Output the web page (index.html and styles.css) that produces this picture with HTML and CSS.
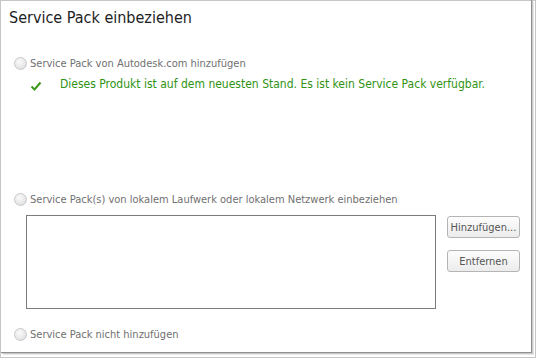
FILE: index.html
```html
<!DOCTYPE html>
<html>
<head>
<meta charset="utf-8">
<link rel="stylesheet" href="styles.css">
</head>
<body>
<div class="frame">
  <div class="panel">
    <h1 class="title">Service Pack einbeziehen</h1>
    <div class="option opt-first">
      <span class="radio"></span>
      <span class="label">Service Pack von Autodesk.com hinzufügen</span>
    </div>
    <div class="status">
      <svg class="check" width="12" height="10" viewBox="0 0 12 10"><path d="M1.5 5.5 L4.5 8.5 L10.5 1.5" fill="none" stroke="#3a9a1a" stroke-width="2"/></svg>
      <span class="status-text">Dieses Produkt ist auf dem neuesten Stand. Es ist kein Service Pack verfügbar.</span>
    </div>
    <div class="option opt-second">
      <span class="radio"></span>
      <span class="label">Service Pack(s) von lokalem Laufwerk oder lokalem Netzwerk einbeziehen</span>
    </div>
    <div class="local">
      <div class="listbox"></div>
      <div class="buttons">
        <button class="btn">Hinzufügen...</button>
        <button class="btn">Entfernen</button>
      </div>
    </div>
    <div class="option opt-third">
      <span class="radio"></span>
      <span class="label">Service Pack nicht hinzufügen</span>
    </div>
  </div>
</div>
</body>
</html>
```
FILE: styles.css
```css
html, body { margin: 0; padding: 0; background: #fff; }
body { width: 536px; height: 358px; overflow: hidden; font-family: "DejaVu Sans Condensed", "DejaVu Sans", sans-serif; }
.frame {
  box-sizing: border-box;
  width: 536px; height: 358px;
  border: 1px solid #c6c6c6;
  background: #fff;
}
.panel {
  box-sizing: border-box;
  width: 531px; height: 353px;
  margin-top: -1px;
  border-right: 1px solid #8f8f8f;
  border-bottom: 1px solid #8f8f8f;
  box-shadow: 1px 1px 0 #c8c8c8, 2px 2px 0 #e6e6e6;
  padding: 0 0 0 8px;
}
.title {
  margin: 0; padding: 7px 0 0 0;
  font-weight: normal; font-size: 16px; line-height: 22px; color: #1e1e1e;
  font-family: "DejaVu Sans Condensed", "DejaVu Sans", sans-serif;
}
.option { display: flex; align-items: center; height: 14px; }
.opt-first { margin-top: 27px; }
.opt-second { margin-top: 101px; }
.opt-third { margin-top: 18px; }
.radio {
  box-sizing: border-box;
  width: 13px; height: 13px; border-radius: 50%;
  border: 1px solid #c9c9c9;
  background: radial-gradient(circle at 40% 35%, #fafafa 0%, #e9e9e9 55%, #d6d6d6 100%);
  margin-left: 5px; margin-right: 3px;
}
.label { font-size: 11px; color: #707070; }
.status { display: flex; align-items: center; margin-top: 7px; height: 14px; }
.check { margin-left: 21px; margin-top: 4px; }
.status-text { margin-left: 18px; font-size: 12px; color: #2f9314; }
.local { display: flex; margin-top: 9px; }
.listbox {
  box-sizing: border-box;
  width: 410px; height: 94px;
  margin-left: 17px;
  border: 1px solid #7c7c7c;
  background: #fff;
}
.buttons { display: flex; flex-direction: column; gap: 12px; margin-left: 11px; margin-top: 1px; }
.btn {
  box-sizing: border-box;
  width: 73px; height: 22px;
  border: 1px solid #b4b4b4; border-radius: 3px;
  background: linear-gradient(#fdfdfd, #ececec);
  font-family: "DejaVu Sans Condensed", "DejaVu Sans", sans-serif;
  font-size: 11px; color: #555; padding: 0;
}
```
